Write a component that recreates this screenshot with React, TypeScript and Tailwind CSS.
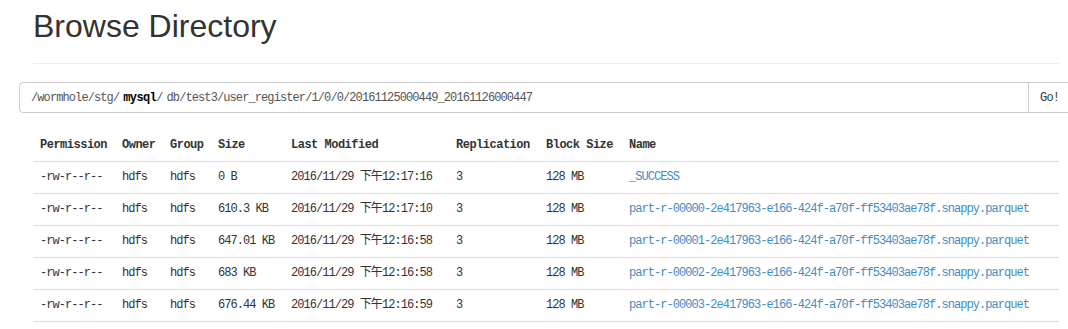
import React from "react";

const rows = [
  { size: "0 B", time: "12:17:16", name: "_SUCCESS" },
  { size: "610.3 KB", time: "12:17:10", name: "part-r-00000-2e417963-e166-424f-a70f-ff53403ae78f.snappy.parquet" },
  { size: "647.01 KB", time: "12:16:58", name: "part-r-00001-2e417963-e166-424f-a70f-ff53403ae78f.snappy.parquet" },
  { size: "683 KB", time: "12:16:58", name: "part-r-00002-2e417963-e166-424f-a70f-ff53403ae78f.snappy.parquet" },
  { size: "676.44 KB", time: "12:16:59", name: "part-r-00003-2e417963-e166-424f-a70f-ff53403ae78f.snappy.parquet" },
];

const mono = "[font-family:'Liberation_Mono','Noto_Sans_CJK_SC',monospace]";

export default function App() {
  return (
    <div className="w-[1068px] h-[329px] overflow-hidden bg-white">
      <div className="pl-[33px] pr-[9px]">
        <h1 className="mt-[9px] text-[32px] leading-[35px] text-[#333] [font-family:'Liberation_Sans',Arial,sans-serif]">
          Browse Directory
        </h1>
        <div className="mt-[19px] h-px bg-[#eee]" />
        <div className="mt-[18px] -ml-[14px] flex w-[1090px]">
          <div
            className={`h-[31px] w-[1010px] shrink-0 rounded-l-[4px] border border-[#ccc] pl-[11px] flex items-center text-[12px] tracking-[-0.9px] text-[#555] ${mono}`}
          >
            <span>/wormhole/stg/</span>
            <span className="font-bold text-black ml-[4px] tracking-[-0.6px]">mysql</span>
            <span>/</span>
            <span className="ml-[4px]">db/test3/user_register/1/0/0/20161125000449_20161126000447</span>
          </div>
          <div
            className={`-ml-px h-[31px] w-[60px] shrink-0 border border-[#ccc] bg-white pl-[11px] flex items-center text-[12px] tracking-[-0.8px] text-[#333] ${mono}`}
          >
            Go!
          </div>
        </div>
        <table className={`mt-[16px] w-[1026px] table-fixed border-collapse text-[12px] text-[#333] ${mono}`}>
          <thead>
            <tr className="h-[32px] border-b border-[#ddd]">
              <th className="w-[81px] pl-[7px] text-left font-bold tracking-[-0.5px]">Permission</th>
              <th className="w-[48px] pl-[8px] text-left font-bold tracking-[-0.5px]">Owner</th>
              <th className="w-[48px] pl-[8px] text-left font-bold tracking-[-0.5px]">Group</th>
              <th className="w-[73px] pl-[8px] text-left font-bold tracking-[-0.5px]">Size</th>
              <th className="w-[165px] pl-[8px] text-left font-bold tracking-[-0.5px]">Last Modified</th>
              <th className="w-[90px] pl-[8px] text-left font-bold tracking-[-0.5px]">Replication</th>
              <th className="w-[83px] pl-[8px] text-left font-bold tracking-[-0.5px]">Block Size</th>
              <th className="w-[438px] pl-[8px] text-left font-bold tracking-[-0.5px]">Name</th>
            </tr>
          </thead>
          <tbody className="tracking-[-0.95px]">
            {rows.map((r) => (
              <tr key={r.name} className="h-[32px] border-b border-[#ddd]">
                <td className="pl-[7px] whitespace-nowrap">-rw-r--r--</td>
                <td className="pl-[8px]">hdfs</td>
                <td className="pl-[8px]">hdfs</td>
                <td className="pl-[8px] whitespace-nowrap">{r.size}</td>
                <td className="pl-[8px] whitespace-nowrap">2016/11/29 下午{r.time}</td>
                <td className="pl-[8px]">3</td>
                <td className="pl-[8px] whitespace-nowrap">128 MB</td>
                <td className="pl-[8px] whitespace-nowrap">
                  <a className="text-[#428bca]">{r.name}</a>
                </td>
              </tr>
            ))}
          </tbody>
        </table>
      </div>
    </div>
  );
}
